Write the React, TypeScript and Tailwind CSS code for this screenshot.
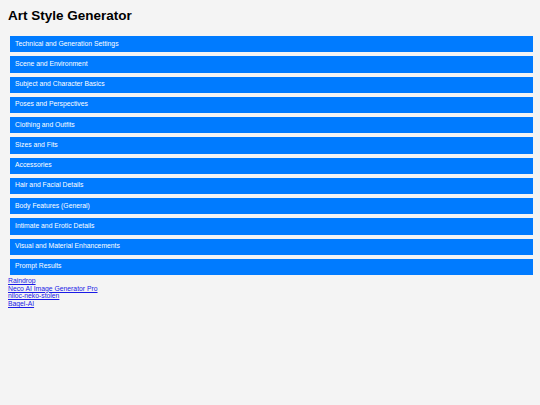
const sections = [
  'Technical and Generation Settings',
  'Scene and Environment',
  'Subject and Character Basics',
  'Poses and Perspectives',
  'Clothing and Outfits',
  'Sizes and Fits',
  'Accessories',
  'Hair and Facial Details',
  'Body Features (General)',
  'Intimate and Erotic Details',
  'Visual and Material Enhancements',
  'Prompt Results',
];

const links = ['Raindrop', 'Neco AI Image Generator Pro', 'niloc-neko-stolen', 'Bagel-AI'];

export default function App() {
  return (
    <div className="min-h-screen w-full bg-[#f4f4f4] px-2 pt-2 font-['Liberation_Sans',Arial,sans-serif] text-black">
      {/* Header */}
      <h1 className="m-0 text-[13.5px] leading-[15.5px] font-bold">Art Style Generator</h1>

      {/* Sections */}
      <div className="mt-[12.5px] ml-[2px] flex w-[523px] flex-col gap-[4px]">
        {sections.map((s) => (
          <button
            key={s}
            className="flex h-[16.25px] w-full items-center bg-[#007bff] pl-[5px] text-left text-[6.8px] leading-none text-white"
          >
            {s}
          </button>
        ))}
      </div>

      {/* Links */}
      <div className="mt-[2px] flex flex-col text-[6.8px] leading-[7.7px]">
        {links.map((l) => (
          <a key={l} href="#" className="w-fit text-[#1a1ae6] underline">
            {l}
          </a>
        ))}
      </div>
    </div>
  );
}
